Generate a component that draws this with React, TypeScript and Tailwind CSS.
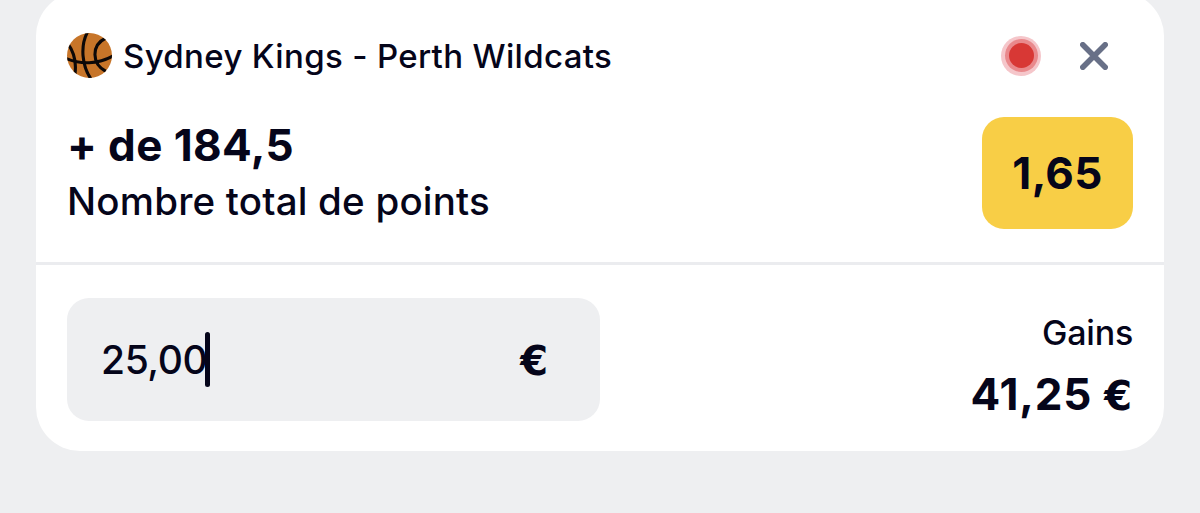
interface Selection {
  match: string
  pick: string
  market: string
  odds: string
  stake: string
  winnings: string
}

const selection: Selection = {
  match: 'Sydney Kings - Perth Wildcats',
  pick: '+ de 184,5',
  market: 'Nombre total de points',
  odds: '1,65',
  stake: '25,00',
  winnings: '41,25',
}

function BasketballIcon() {
  return (
    <svg viewBox="0 0 45 45" className="h-[45px] w-[45px] shrink-0" fill="none" aria-hidden="true">
      <clipPath id="ball">
        <circle cx="22.5" cy="22.5" r="22.5" />
      </clipPath>
      <g clipPath="url(#ball)">
        <rect width="45" height="45" fill="#c77529" />
        <g stroke="#0c0808" strokeWidth="3.1">
          <path d="M-1 25.5 C13 31.5 31 31.5 46 23" />
          <path d="M20.5 -1 C13 13 15 33 24 46" />
          <path d="M1 11 C7 19 9.5 29 8 41" />
          <path d="M39 5 C24 12 24.5 31 39 38.5" />
        </g>
      </g>
    </svg>
  )
}

function CloseIcon() {
  return (
    <svg viewBox="0 0 28 28" className="h-7 w-7" stroke="#687087" strokeWidth="5.6" strokeLinecap="round" aria-hidden="true">
      <path d="M2.8 2.8 L25.2 25.2 M25.2 2.8 L2.8 25.2" />
    </svg>
  )
}

function LiveDot() {
  return (
    <span className="flex h-10 w-10 items-center justify-center rounded-full bg-[#f5c6ca]">
      <span className="flex h-[33px] w-[33px] items-center justify-center rounded-full bg-[#e9898c]">
        <span className="h-[25px] w-[25px] rounded-full bg-[#d83835]" />
      </span>
    </span>
  )
}

export default function App() {
  return (
    <div className="h-[513px] overflow-hidden bg-[#eeeff1] px-9 font-['Inter',sans-serif] text-[#05051a]">
      <div className="-mt-2 h-[459px] rounded-[44px] bg-white">
        {/* Match */}
        <div className="flex h-[273px] flex-col border-b-[3px] border-[#ebecef] px-[31px] pt-[41px]">
          <div className="flex h-[45px] items-center">
            <BasketballIcon />
            <span className="ml-[11px] pt-[2px] text-[33px] font-[450] tracking-[0.34px] whitespace-nowrap">
              {selection.match}
            </span>
            <span className="ml-auto">
              <LiveDot />
            </span>
            <button className="mr-[25px] ml-[39px]" aria-label="Supprimer">
              <CloseIcon />
            </button>
          </div>
          <div className="mt-[39px] flex justify-between">
            <div>
              <p className="text-[44px] leading-[56px] font-bold tracking-[0.4px]">{selection.pick}</p>
              <p className="text-[38.5px] leading-[56px] font-[450] tracking-[0.2px]">{selection.market}</p>
            </div>
            <div className="flex h-28 w-[151px] items-center justify-center rounded-[22px] bg-[#f8ce46] text-[44px] font-bold tracking-[0.3px]">
              {selection.odds}
            </div>
          </div>
        </div>

        {/* Mise et gains */}
        <div className="flex justify-between px-[31px] pt-[33px]">
          <div className="flex h-[123px] w-[533px] items-center rounded-[22px] bg-[#eeeff1] pr-[52px] pl-[34px] text-[39px]">
            <span className="pt-[2px] font-[450] tracking-[-0.4px]">{selection.stake}</span>
            <span className="-ml-[2px] h-[55px] w-[5px] rounded-full bg-[#05051a]" />
            <span className="ml-auto pt-[3px] font-['DejaVu_Sans',sans-serif] text-[40px] font-bold">€</span>
          </div>
          <div className="pt-[7px] text-right">
            <p className="text-[34px] leading-[56px] font-[450] tracking-[-0.2px]">Gains</p>
            <p className="flex h-[66px] items-center justify-end pr-px text-[44px] leading-[64px] font-bold">
              <span className="tracking-[0.8px]">{selection.winnings}</span>
              <span className="ml-[12px] pt-[3px] font-['DejaVu_Sans',sans-serif] text-[40px]">€</span>
            </p>
          </div>
        </div>
      </div>
    </div>
  )
}
